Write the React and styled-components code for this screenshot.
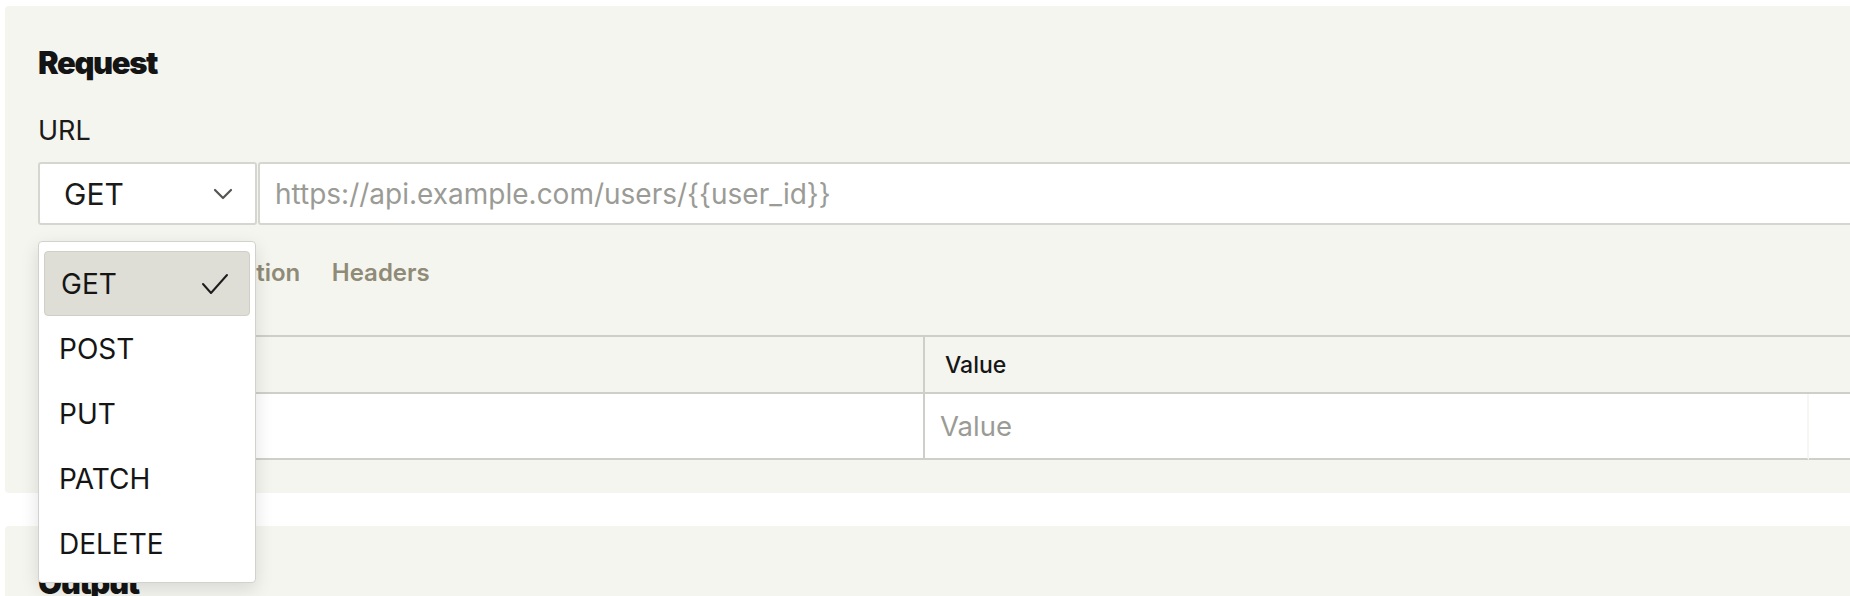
import React from "react";
import styled, { createGlobalStyle } from "styled-components";

const GlobalStyle = createGlobalStyle`
  body {
    margin: 0;
    background: #ffffff;
    font-family: Inter, "Noto Sans", sans-serif;
    color: #1a1a1a;
    overflow: hidden;
  }
`;

const Page = styled.div`
  width: 1900px;
  padding: 6px 0 0 5px;
  display: flex;
  flex-direction: column;
  gap: 33px;
  position: relative;
`;

const Panel = styled.section`
  background: #f5f5f0;
  border-radius: 4px;
  padding: 38px 0 33px 33px;
`;

const Title = styled.h2`
  margin: 0;
  font-size: 31px;
  font-weight: 900;
  letter-spacing: -0.045em;
  line-height: 37px;
  color: #141414;
`;

const Label = styled.div`
  margin-top: 34px;
  font-size: 27px;
  line-height: 32px;
  color: #1a1a1a;
`;

const UrlRow = styled.div`
  margin-top: 15px;
  display: flex;
  gap: 1px;
  height: 63px;
`;

const MethodSelect = styled.div`
  box-sizing: border-box;
  width: 219px;
  display: flex;
  align-items: center;
  justify-content: space-between;
  padding: 0 22px 0 24px;
  background: #ffffff;
  border: 2px solid #d6d6d1;
  border-radius: 3px;
  font-size: 30px;
`;

const UrlInput = styled.div`
  box-sizing: border-box;
  flex: 1;
  display: flex;
  align-items: center;
  padding-left: 15px;
  background: #ffffff;
  border: 2px solid #d6d6d1;
  border-radius: 3px;
  font-size: 28px;
  color: #9b9b96;
`;

const Tabs = styled.div`
  margin-top: 34px;
  display: flex;
  gap: 31.5px;
`;

const Tab = styled.div`
  font-size: 24px;
  font-weight: 600;
  line-height: 28px;
  padding-bottom: 10px;
  color: ${(p) => (p.$active ? "#1a1a1a" : "#8f8b77")};
  border-bottom: 4px solid ${(p) => (p.$active ? "#1a1a1a" : "transparent")};
`;

const Table = styled.div`
  margin-top: 34px;
  display: grid;
  grid-template-columns: 885px 884px 1fr;
  border-top: 2px solid #cfcfc9;
  border-left: 2px solid #cfcfc9;
`;

const HeadCell = styled.div`
  box-sizing: border-box;
  height: 57px;
  display: flex;
  align-items: center;
  padding-left: 20px;
  font-size: 23px;
  font-weight: 500;
  color: #161616;
  border-bottom: 2px solid #cfcfc9;
  border-right: ${(p) => (p.$open ? "none" : "2px solid #cfcfc9")};
`;

const Cell = styled.div`
  box-sizing: border-box;
  height: 66px;
  display: flex;
  align-items: center;
  padding-left: 15px;
  background: #ffffff;
  font-size: 27.5px;
  color: #9b9b96;
  border-bottom: 2px solid #cfcfc9;
  border-right: 2px solid ${(p) => (p.$faint ? "#f6f6f4" : "#cfcfc9")};
`;

const Menu = styled.div`
  position: absolute;
  left: 38px;
  top: 241px;
  box-sizing: border-box;
  width: 218px;
  padding: 9px 5px 6px;
  background: #ffffff;
  border: 1px solid #d2d2cd;
  border-radius: 4px;
  box-shadow: 0 6px 18px rgba(0, 0, 0, 0.12);
`;

const MenuItem = styled.div`
  box-sizing: border-box;
  height: 65px;
  display: flex;
  align-items: center;
  justify-content: space-between;
  padding: 0 20px 0 ${(p) => (p.$selected ? "16px" : "14px")};
  font-size: 28px;
  color: #151515;
  border-radius: 4px;
  background: ${(p) => (p.$selected ? "#deddd6" : "transparent")};
  border: 1px solid ${(p) => (p.$selected ? "#d0cfc7" : "transparent")};
`;

const Chevron = () => (
  <svg width="20" height="12" viewBox="0 0 20 12" fill="none">
    <polyline
      points="2 2 10 10 18 2"
      stroke="#555550"
      strokeWidth="2.2"
      strokeLinecap="round"
      strokeLinejoin="round"
    />
  </svg>
);

const Check = () => (
  <svg width="28" height="22" viewBox="0 0 28 22" fill="none">
    <polyline
      points="2 11 10 20 26 2"
      stroke="#1c1c1c"
      strokeWidth="2"
      strokeLinecap="round"
      strokeLinejoin="round"
    />
  </svg>
);

const methods = ["GET", "POST", "PUT", "PATCH", "DELETE"];

export default function App() {
  return (
    <>
      <GlobalStyle />
      <Page>
        <Panel>
          <Title>Request</Title>
          <Label>URL</Label>
          <UrlRow>
            <MethodSelect>
              <span>GET</span>
              <Chevron />
            </MethodSelect>
            <UrlInput>https://api.example.com/users/{"{{user_id}}"}</UrlInput>
          </UrlRow>
          <Tabs>
            <Tab $active>Body</Tab>
            <Tab>Authentication</Tab>
            <Tab>Headers</Tab>
          </Tabs>
          <Table>
            <HeadCell>Key</HeadCell>
            <HeadCell $open>Value</HeadCell>
            <HeadCell $open />
            <Cell>Key</Cell>
            <Cell $faint>Value</Cell>
            <Cell $faint />
          </Table>
        </Panel>
        <Panel>
          <Title>Output</Title>
          <Label>Response</Label>
        </Panel>
        <Menu>
          {methods.map((m) => (
            <MenuItem key={m} $selected={m === "GET"}>
              <span>{m}</span>
              {m === "GET" && <Check />}
            </MenuItem>
          ))}
        </Menu>
      </Page>
    </>
  );
}
